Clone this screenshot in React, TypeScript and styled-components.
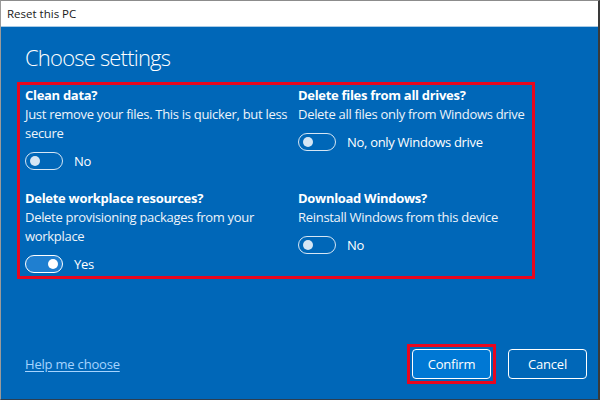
import React, { useState } from 'react';
import styled, { createGlobalStyle } from 'styled-components';

const GlobalStyle = createGlobalStyle`
  html, body {
    margin: 0;
    padding: 0;
    background: #ffffff;
  }
  * {
    box-sizing: border-box;
  }
`;

const FONT = `'Open Sans', 'Noto Sans', 'Liberation Sans', sans-serif`;

const Window = styled.div`
  width: 600px;
  height: 400px;
  display: flex;
  flex-direction: column;
  border-top: 1px solid #8c8c8c;
  border-left: 1px solid #9a9a9a;
  border-right: 2px solid #3a3a3a;
  border-bottom: 1px solid #2c3e50;
  font-family: ${FONT};
  overflow: hidden;
`;

const TitleBar = styled.div`
  height: 26px;
  flex: none;
  display: flex;
  align-items: center;
  padding-left: 6px;
  background: #ffffff;
  border-bottom: 1px solid #a9cbe6;
  color: #1a1a1a;
  font-size: 11.5px;
`;

const Body = styled.div`
  flex: 1;
  display: flex;
  flex-direction: column;
  background: #0067b8;
  color: #ffffff;
  padding: 14px 11px 15px 24px;
`;

const Heading = styled.h1`
  margin: 0 0 9px 0;
  font-size: 22px;
  line-height: 32px;
  font-weight: 300;
  letter-spacing: -0.8px;
`;

const Highlight = styled.div`
  border: 3px solid #e8071f;
`;

const SettingsBox = styled(Highlight)`
  width: 518px;
  margin-left: -8px;
  padding: 1px 3px 3px 5px;
  display: grid;
  grid-template-columns: 273px 1fr;
  row-gap: 19px;
  align-items: start;
`;

const Setting = styled.div`
  display: flex;
  flex-direction: column;
`;

const SettingTitle = styled.div`
  font-size: 13px;
  line-height: 19px;
  font-weight: 700;
  letter-spacing: -0.3px;
`;

const SettingText = styled.div`
  font-size: 13px;
  line-height: 19px;
  color: #eef4fa;
  letter-spacing: -0.3px;
`;

const ToggleRow = styled.label`
  display: flex;
  align-items: center;
  gap: 11px;
  margin-top: 9px;
  font-size: 13px;
  line-height: 18px;
  cursor: pointer;
  letter-spacing: -0.3px;
`;

const Track = styled.span<{ $on: boolean }>`
  position: relative;
  width: 38px;
  height: 18px;
  flex: none;
  border-radius: 9px;
  border: 1px solid ${(p) => (p.$on ? '#ffffff' : '#d6e6f4')};
  background: ${(p) => (p.$on ? '#1f7fd0' : 'transparent')};
`;

const Knob = styled.span<{ $on: boolean }>`
  position: absolute;
  top: 3px;
  left: ${(p) => (p.$on ? '22px' : '4px')};
  width: 10px;
  height: 10px;
  border-radius: 50%;
  background: ${(p) => (p.$on ? '#ffffff' : '#d6e6f4')};
`;

const Footer = styled.div`
  margin-top: auto;
  display: flex;
  align-items: center;
  gap: 12px;
`;

const HelpLink = styled.a`
  margin-right: auto;
  color: #a6d4ff;
  font-size: 13px;
  text-decoration: underline;
  text-underline-offset: 2px;
  letter-spacing: -0.2px;
  cursor: pointer;
`;

const ButtonFrame = styled(Highlight)`
  padding: 2px;
`;

const Button = styled.button<{ $primary?: boolean }>`
  width: 79px;
  height: 30px;
  border-radius: 4px;
  border: 1.5px solid #ffffff;
  background: ${(p) => (p.$primary ? '#0078d4' : 'transparent')};
  color: #ffffff;
  font-family: ${FONT};
  font-size: 13px;
  letter-spacing: -0.2px;
  cursor: pointer;
`;

interface ToggleProps {
  on: boolean;
  label: string;
  onChange: () => void;
}

const Toggle = ({ on, label, onChange }: ToggleProps) => (
  <ToggleRow onClick={onChange}>
    <Track $on={on}>
      <Knob $on={on} />
    </Track>
    {label}
  </ToggleRow>
);

const App = () => {
  const [clean, setClean] = useState(false);
  const [allDrives, setAllDrives] = useState(false);
  const [workplace, setWorkplace] = useState(true);
  const [download, setDownload] = useState(false);

  return (
    <>
      <GlobalStyle />
      <Window>
        <TitleBar>Reset this PC</TitleBar>
        <Body>
          <Heading>Choose settings</Heading>
          <SettingsBox>
            <Setting>
              <SettingTitle>Clean data?</SettingTitle>
              <SettingText>
                Just remove your files. This is quicker, but less secure
              </SettingText>
              <Toggle
                on={clean}
                label={clean ? 'Yes' : 'No'}
                onChange={() => setClean(!clean)}
              />
            </Setting>
            <Setting>
              <SettingTitle>Delete files from all drives?</SettingTitle>
              <SettingText>Delete all files only from Windows drive</SettingText>
              <Toggle
                on={allDrives}
                label={allDrives ? 'Yes' : 'No, only Windows drive'}
                onChange={() => setAllDrives(!allDrives)}
              />
            </Setting>
            <Setting>
              <SettingTitle>Delete workplace resources?</SettingTitle>
              <SettingText>
                Delete provisioning packages from your workplace
              </SettingText>
              <Toggle
                on={workplace}
                label={workplace ? 'Yes' : 'No'}
                onChange={() => setWorkplace(!workplace)}
              />
            </Setting>
            <Setting>
              <SettingTitle>Download Windows?</SettingTitle>
              <SettingText>Reinstall Windows from this device</SettingText>
              <Toggle
                on={download}
                label={download ? 'Yes' : 'No'}
                onChange={() => setDownload(!download)}
              />
            </Setting>
          </SettingsBox>
          <Footer>
            <HelpLink>Help me choose</HelpLink>
            <ButtonFrame>
              <Button $primary>Confirm</Button>
            </ButtonFrame>
            <Button>Cancel</Button>
          </Footer>
        </Body>
      </Window>
    </>
  );
};

export default App;
